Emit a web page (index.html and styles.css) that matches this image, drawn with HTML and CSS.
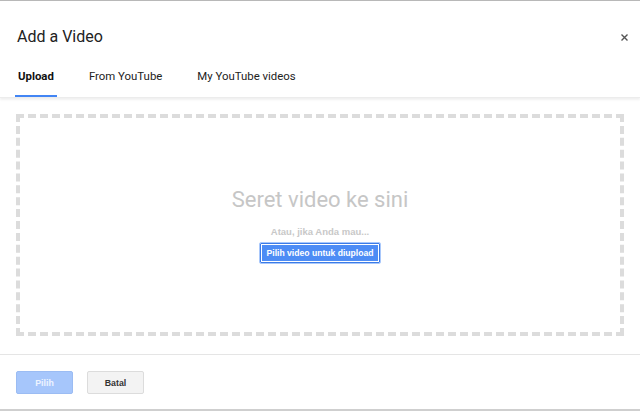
FILE: index.html
```html
<!DOCTYPE html>
<html>
<head>
<meta charset="utf-8">
<link rel="stylesheet" href="styles.css">
</head>
<body>
<div class="dialog">
  <div class="header">
    <div class="title-row">
      <h1 class="title">Add a Video</h1>
      <span class="close">
        <svg width="7" height="7" viewBox="0 0 7 7"><path d="M0.5 0.5L6.5 6.5M6.5 0.5L0.5 6.5" stroke="#555" stroke-width="1.4"/></svg>
      </span>
    </div>
    <div class="tabs">
      <div class="tab active">Upload</div>
      <div class="tab">From YouTube</div>
      <div class="tab">My YouTube videos</div>
    </div>
  </div>
  <div class="content">
    <div class="dropzone">
      <div class="drop-title">Seret video ke sini</div>
      <div class="drop-sub">Atau, jika Anda mau...</div>
      <button class="pick-btn">Pilih video untuk diupload</button>
    </div>
  </div>
  <div class="footer">
    <button class="btn btn-primary">Pilih</button>
    <button class="btn btn-secondary">Batal</button>
  </div>
</div>
</body>
</html>
```
FILE: styles.css
```css
* { box-sizing: border-box; }
html, body { margin: 0; padding: 0; background: #fff; }
body { font-family: Roboto, "Liberation Sans", Arial, sans-serif; }

.dialog {
  width: 640px;
  height: 411px;
  border-top: 1px solid #b8b8b8;
  border-bottom: 2px solid #cfcfcf;
  display: flex;
  flex-direction: column;
  background: #fff;
}

.header {
  position: relative;
  z-index: 1;
  padding: 0 15px;
  border-bottom: 1px solid #ececec;
  box-shadow: 0 2px 2px rgba(0,0,0,0.06);
}

.title-row {
  height: 55px;
  display: flex;
  align-items: center;
  justify-content: space-between;
  padding-top: 17px;
  padding-left: 2px;
}
.title {
  margin: 0;
  font-size: 16px;
  font-weight: 400;
  color: #222;
  line-height: 22px;
}
.close {
  display: flex;
  margin-right: -3px;
}

.tabs {
  display: flex;
  height: 41px;
  gap: 29px;
}
.tab {
  padding: 1px 3px 0;
  font-size: 11.4px;
  color: #222;
  line-height: 39px;
  height: 41px;
  border-bottom: 2px solid transparent;
}
.tab.active {
  font-weight: 700;
  border-bottom-color: #4285f4;
  color: #111;
}

.content {
  flex: 1;
  padding: 16px 16px 18px;
  display: flex;
}
.dropzone {
  flex: 1;
  border: 4px dashed #dcdcdc;
  display: flex;
  flex-direction: column;
  align-items: center;
  justify-content: center;
}
.drop-title {
  font-size: 22px;
  color: #c6c6c6;
  line-height: 26px;
}
.drop-sub {
  font-family: "Liberation Sans", Arial, sans-serif;
  font-size: 9.5px;
  font-weight: 700;
  color: #c8c8c8;
  margin-top: 12px;
  line-height: 14px;
}
.pick-btn {
  margin-top: 4px;
  height: 20px;
  padding: 0 6px;
  font-family: "Liberation Sans", Arial, sans-serif;
  font-size: 8.6px;
  font-weight: 700;
  color: #fff;
  background: #4d8cf5;
  border: 1px solid #3b7be8;
  outline: 1px solid #a9c8fb;
  outline-offset: 0;
  border-radius: 1px;
  box-shadow: inset 0 0 0 1px #fff;
}

.footer {
  height: 55px;
  border-top: 1px solid #e5e5e5;
  display: flex;
  align-items: flex-start;
  padding: 16px 16px 0;
  gap: 14px;
}
.btn {
  height: 23px;
  width: 57px;
  font-family: "Liberation Sans", Arial, sans-serif;
  font-size: 8.8px;
  font-weight: 700;
  border-radius: 2px;
  padding: 0;
}
.btn-primary {
  background: #a6c6fb;
  border: 1px solid #9bbcf3;
  color: #eef4ff;
}
.btn-secondary {
  background: #f3f3f3;
  border: 1px solid #dcdcdc;
  color: #333;
}
```
